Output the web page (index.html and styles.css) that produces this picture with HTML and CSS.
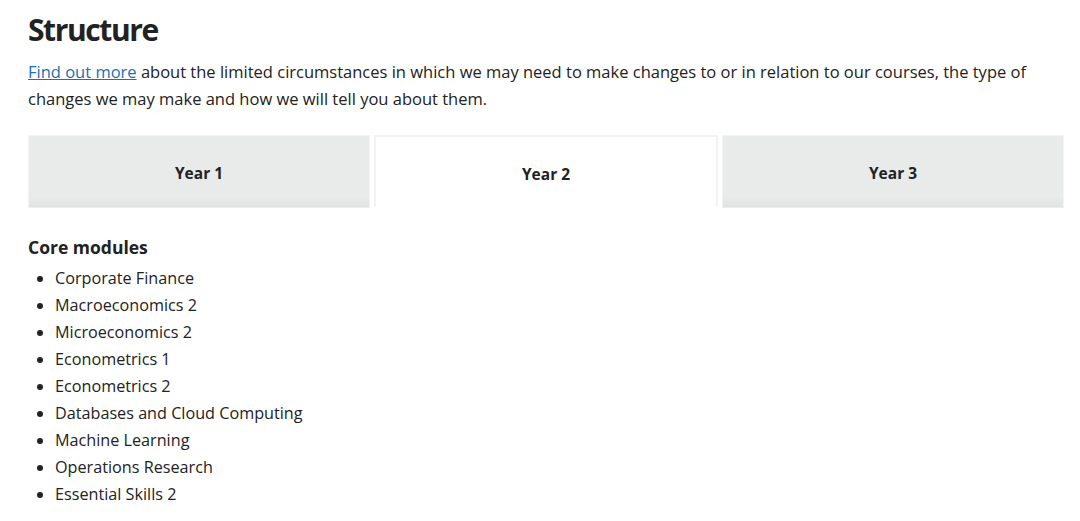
FILE: index.html
```html
<!DOCTYPE html>
<html lang="en">
<head>
<meta charset="utf-8">
<title>Structure</title>
<link rel="stylesheet" href="styles.css">
</head>
<body>
<main class="page">
  <h2 class="title">Structure</h2>
  <p class="intro"><a href="#" class="link">Find out more</a> about the limited circumstances in which we may need to make changes to or in relation to our courses, the type of changes we may make and how we will tell you about them.</p>
  <div class="tabs">
    <button class="tab">Year 1</button>
    <button class="tab tab-active">Year 2</button>
    <button class="tab">Year 3</button>
  </div>
  <section class="panel">
    <h3 class="panel-title">Core modules</h3>
    <ul class="modules">
      <li>Corporate Finance</li>
      <li>Macroeconomics 2</li>
      <li>Microeconomics 2</li>
      <li>Econometrics 1</li>
      <li>Econometrics 2</li>
      <li>Databases and Cloud Computing</li>
      <li>Machine Learning</li>
      <li>Operations Research</li>
      <li>Essential Skills 2</li>
    </ul>
  </section>
</main>
</body>
</html>
```
FILE: styles.css
```css
* { box-sizing: border-box; }
html, body { margin: 0; padding: 0; background: #fff; }
body {
  font-family: "Open Sans", "Noto Sans", sans-serif;
  color: #222;
  font-size: 16px;
}
.page {
  padding: 9px 16px 0 28px;
}
.title {
  margin: 0;
  font-size: 30px;
  line-height: 42px;
  font-weight: 700;
  letter-spacing: -1.4px;
}
.intro {
  margin: 7px 0 0;
  font-size: 16.5px;
  line-height: 27px;
}
.link {
  color: #1a70b5;
  text-decoration: underline;
}
.tabs {
  display: flex;
  gap: 4px;
  margin-top: 23px;
}
.tab {
  flex: 1;
  height: 72px;
  padding-top: 4px;
  border: 1px solid #f3f4f4;
  border-bottom: 0;
  background: linear-gradient(to bottom, #e9ebeb 0, #e9ebeb 86%, #e1e3e3 100%);
  background-clip: padding-box;
  font-family: inherit;
  font-size: 15.5px;
  font-weight: 700;
  color: #222;
  box-shadow: 0 1px 0 #eceeee;
}
.tab-active {
  background: #fff;
  border: 2px solid #f2f3f3;
  border-bottom: 0;
  box-shadow: none;
}
.panel {
  padding-top: 27px;
}
.panel-title {
  margin: 0;
  font-size: 17.5px;
  line-height: 26px;
  font-weight: 700;
}
.modules {
  margin: 5px 0 0;
  padding-left: 27px;
  font-size: 16.2px;
  line-height: 27px;
}
```
